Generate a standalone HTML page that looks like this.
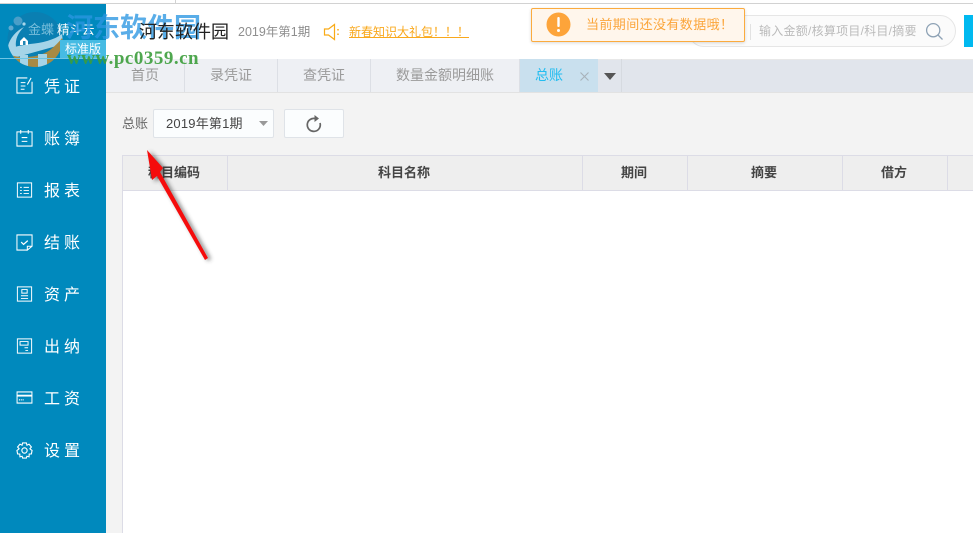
<!DOCTYPE html>
<html lang="zh">
<head>
<meta charset="utf-8">
<style>
*{box-sizing:border-box}
html,body{margin:0;padding:0;width:973px;height:533px;overflow:hidden;background:#f3f3f3;font-family:"Liberation Sans","Noto Sans CJK SC",sans-serif}
.a{position:absolute;white-space:nowrap}
.nav{position:absolute;left:44px;color:#fff;font-size:16px;letter-spacing:4px;line-height:20px;height:20px}
.ic{position:absolute;left:16px}
.tab{position:absolute;top:59px;height:33px;background:#eef0f4;border-right:1px solid #dcdfe5;color:#9a9a9a;font-size:14px;line-height:33px;text-align:center}
.th{position:absolute;top:156px;height:34px;border-right:1px solid #dcdce6;background:#eeeeee;color:#444;font-size:13px;font-weight:bold;line-height:34px;text-align:center;padding-right:2px}
</style>
</head>
<body>
<div class="a" style="left:0;top:0;width:973px;height:3px;background:#fff"></div>
<div class="a" style="left:0;top:3px;width:973px;height:1px;background:#d2d2d2"></div>
<div class="a" style="left:175px;top:0;width:1px;height:3px;background:#d2d2d2"></div>
<div class="a" style="left:106px;top:4px;width:867px;height:55px;background:#fff"></div>
<div class="a" style="left:0;top:4px;width:106px;height:529px;background:#0089bd"></div>

<svg class="a" style="left:0;top:0" width="106" height="70" viewBox="0 0 106 70">
<defs><clipPath id="c"><circle cx="35" cy="39.5" r="27.5"/></clipPath></defs>
<circle cx="35" cy="39.5" r="27.5" fill="#0a7fb2"/>
<circle cx="18" cy="21" r="4.5" fill="#4a9ec8"/><circle cx="11" cy="28" r="2.5" fill="#5fa9cf"/><circle cx="24" cy="24" r="1.6" fill="#a8d6ea"/>
<g clip-path="url(#c)">
<path d="M8 46C10 38 16 31 24 27C18 33 15 39 16 47L8 50Z" fill="#a5d4e8"/>
<path d="M6 52C12 46 20 46 30 44C42 43 54 40 62 34L64 44L6 60Z" fill="#a5d4e8"/>
<path d="M4 52C12 58 36 60 50 50C55 46 59 42 62 38L66 50L60 70H8Z" fill="#a78a44"/>
<rect x="20" y="55" width="8" height="14" fill="#a5d4e8"/>
<rect x="38" y="54" width="9" height="14" fill="#a5d4e8"/>
</g>
<path d="M20 41L24 37L28 41V45H20Z" fill="#fff"/>
<rect x="23" y="41" width="2.5" height="4" fill="#1f86b4"/>
<rect x="0" y="58" width="106" height="1" fill="#6ec5e4"/>
<rect x="60" y="40" width="46" height="18" fill="#46bbe3"/>
</svg>
<div class="a" style="left:28px;top:22px;font-size:13px;color:#79bedb;line-height:16px">金蝶</div>
<div class="a" style="left:57px;top:22px;font-size:12.5px;color:#fff;line-height:16px">精斗云</div>
<div class="a" style="left:65px;top:41px;font-size:12px;color:#fff;line-height:16px">标准版</div>

<div class="a" style="left:238px;top:23px;font-size:12.5px;color:#8f8f8f;line-height:18px">2019年第1期</div>

<svg class="a" style="left:323px;top:23px" width="18" height="18" viewBox="0 0 18 18" fill="none" stroke="#f9ab17" stroke-width="1.2"><path d="M1.5 6H5.5L11.5 1.5V16.5L5.5 12H1.5Z"/><path d="M15 6V7.5M15 10.5V12" stroke-width="1.5"/></svg>
<div class="a" style="left:349px;top:24px;font-size:12px;color:#f9a81c;line-height:16px;text-decoration:underline">新春知识大礼包！！！</div>

<div class="a" style="left:688px;top:15px;width:268px;height:32px;border:1px solid #e6e6e6;border-radius:16px;background:#fbfbfb"></div>
<div class="a" style="left:750px;top:24px;width:1px;height:16px;background:#e2e2e2"></div>
<div class="a" style="left:759px;top:23px;font-size:12px;color:#bbb;line-height:17px;letter-spacing:.25px">输入金额/核算项目/科目/摘要</div>
<svg class="a" style="left:925px;top:22px" width="19" height="19" viewBox="0 0 19 19" fill="none" stroke="#8ea2b5" stroke-width="1.3"><circle cx="8.2" cy="8.2" r="6.6"/><path d="M13 13L17.5 17.5"/></svg>
<div class="a" style="left:964px;top:15px;width:9px;height:32px;background:#00b9f0"></div>

<div class="a" style="left:531px;top:8px;width:214px;height:34px;background:#fff6ec;border:1px solid #fbab3e;border-radius:2px;box-shadow:0 1px 3px rgba(0,0,0,.15)"></div>
<svg class="a" style="left:546px;top:12px" width="25" height="25" viewBox="0 0 25 25"><circle cx="12.5" cy="12.5" r="12" fill="#fda43a"/><rect x="11.3" y="5" width="2.4" height="10" rx="1" fill="#fff"/><circle cx="12.5" cy="18.5" r="1.5" fill="#fff"/></svg>
<div class="a" style="left:586px;top:16px;font-size:13px;color:#fba53a;line-height:18px;letter-spacing:.4px">当前期间还没有数据哦！</div>

<div class="a" style="left:106px;top:59px;width:867px;height:34px;background:#e1e5ec;border-top:1px solid #e8e8e8;border-bottom:1px solid #e2e2e2"></div>
<div class="tab" style="left:106px;width:79px">首页</div>
<div class="tab" style="left:185px;width:93px">录凭证</div>
<div class="tab" style="left:278px;width:93px">查凭证</div>
<div class="tab" style="left:371px;width:149px">数量金额明细账</div>
<div class="tab" style="left:520px;width:78px;background:#c9e0ee;border:0;color:#22bdf0;text-align:left;padding-left:15px">总账</div>
<svg class="a" style="left:579px;top:71px" width="11" height="11" viewBox="0 0 11 11" stroke="#a8b2ba" stroke-width="1.1"><path d="M1.5 1.5L9.5 9.5M9.5 1.5L1.5 9.5"/></svg>
<div class="a" style="left:621px;top:59px;width:1px;height:33px;background:#d6dae0"></div>
<svg class="a" style="left:604px;top:73px" width="12" height="7" viewBox="0 0 12 7"><path d="M0 0H12L6 7Z" fill="#555"/></svg>

<div class="a" style="left:122px;top:115px;font-size:13px;color:#666;line-height:18px">总账</div>
<div class="a" style="left:153px;top:109px;width:121px;height:29px;background:#fbfdfe;border:1px solid #dfe3e8;border-radius:2px"></div>
<div class="a" style="left:166px;top:115px;font-size:13px;color:#444;line-height:18px;letter-spacing:.2px">2019年第1期</div>
<svg class="a" style="left:259px;top:121px" width="9" height="5" viewBox="0 0 9 5"><path d="M0 0H9L4.5 5Z" fill="#999"/></svg>
<div class="a" style="left:284px;top:109px;width:60px;height:29px;background:#fbfdfe;border:1px solid #dfe3e8;border-radius:2px"></div>
<svg class="a" style="left:304px;top:114px" width="20" height="20" viewBox="0 0 20 20" fill="none"><path d="M11 4.5A6.5 6.5 0 1 0 16 9" stroke="#666" stroke-width="1.7"/><path d="M10.5 1V8L15 4.5Z" fill="#666"/></svg>

<div class="a" style="left:122px;top:155px;width:851px;height:378px;background:#fff;border-left:1px solid #dcdce6;border-top:1px solid #dcdce6"></div>
<div class="a" style="left:123px;top:156px;width:850px;height:35px;background:#eee;border-bottom:1px solid #dcdce6"></div>
<div class="th" style="left:123px;width:105px">科目编码</div>
<div class="th" style="left:228px;width:355px">科目名称</div>
<div class="th" style="left:583px;width:105px">期间</div>
<div class="th" style="left:688px;width:155px">摘要</div>
<div class="th" style="left:843px;width:105px">借方</div>

<svg class="a" style="left:140px;top:145px" width="75" height="125" viewBox="0 0 75 125">
<defs><filter id="s" x="-40%" y="-20%" width="180%" height="140%"><feGaussianBlur stdDeviation="2.2"/></filter></defs>
<path d="M7 5L24 24L20 28L68 113L65 115L17 32L12 36Z" fill="#333" opacity=".6" filter="url(#s)" transform="translate(3,1)"/>
<path d="M7 5L23 23L20 27L68 113L65 115L17 31L12 35Z" fill="#f50c0c"/>
</svg>

<div class="a" style="left:66px;top:10px;font-size:27px;font-weight:bold;color:#2b97e2;opacity:.78;line-height:36px;font-family:'Liberation Serif','Noto Sans CJK SC',sans-serif">河东软件园</div>
<div class="a" style="left:139px;top:20px;font-size:18px;color:#222;line-height:24px">河东软件园</div>
<div class="a" style="left:67px;top:47px;font-size:19px;font-weight:bold;color:#3c9e3c;opacity:.9;line-height:24px;letter-spacing:.5px;font-family:'Liberation Serif',serif">www.pc0359.cn</div>

<svg class="ic" style="top:77px" width="17" height="17" viewBox="0 0 18 18" fill="none" stroke="#fff" stroke-width="1.1"><path d="M12 1H1V17H17V5"/><path d="M5 6H10M5 9.5H10M5 13H9M12 8L16 1"/></svg>
<div class="nav" style="top:78px">凭证</div>
<svg class="ic" style="top:130px" width="17" height="17" viewBox="0 0 18 18" fill="none" stroke="#fff" stroke-width="1.1"><path d="M1 2H17V17H1Z"/><path d="M5 0V4M13 0V4M6 8H12M6 12H12"/></svg>
<div class="nav" style="top:130px">账簿</div>
<svg class="ic" style="top:182px" width="17" height="16" viewBox="0 0 18 18" fill="none" stroke="#fff" stroke-width="1.1"><path d="M1 1H17V17H1Z"/><path d="M4 6H6M8 6H14M4 9.5H6M8 9.5H14M4 13H6M8 13H14"/></svg>
<div class="nav" style="top:182px">报表</div>
<svg class="ic" style="top:234px" width="17" height="17" viewBox="0 0 18 18" fill="none" stroke="#fff" stroke-width="1.1"><path d="M12 17H1V1H17V13L12 17V13H17"/><path d="M5.5 8.5L8 11L12.5 7" stroke-width="1.3"/></svg>
<div class="nav" style="top:234px">结账</div>
<svg class="ic" style="top:286px" width="17" height="16" viewBox="0 0 18 18" fill="none" stroke="#fff" stroke-width="1.1"><path d="M1 1H17V17H1Z"/><path d="M6 4H12V8H6ZM5 11H13M5 14H13"/></svg>
<div class="nav" style="top:286px">资产</div>
<svg class="ic" style="top:338px" width="17" height="16" viewBox="0 0 18 18" fill="none" stroke="#fff" stroke-width="1.1"><path d="M1 1H17V17H1Z"/><path d="M4 4H13V8H4ZM9 11H13M10 14H13"/></svg>
<div class="nav" style="top:338px">出纳</div>
<svg class="ic" style="top:391px" width="17" height="13" viewBox="0 0 18 14" fill="none" stroke="#fff" stroke-width="1.1"><path d="M1 1H17V13H1Z"/><path d="M1 5H17" stroke-width="2"/><path d="M3 9.5H8" stroke-dasharray="1 1" stroke-width="1.5"/></svg>
<div class="nav" style="top:390px">工资</div>
<svg class="ic" style="top:442px" width="17" height="17" viewBox="0 0 18 18" fill="none" stroke="#fff" stroke-width="1.2"><path d="M7 1H11L11.6 3.4L13.8 2.3L16.3 5.3L14.7 7.2L17 9L16.3 12.6L14 12.7L13.8 15.7L11.5 15.1L11 17H7L6.5 15.1L4.2 15.7L4 12.7L1.7 12.6L1 9L3.3 7.2L1.7 5.3L4.2 2.3L6.4 3.4Z"/><circle cx="9" cy="9" r="2.8"/></svg>
<div class="nav" style="top:442px">设置</div>
</body>
</html>
